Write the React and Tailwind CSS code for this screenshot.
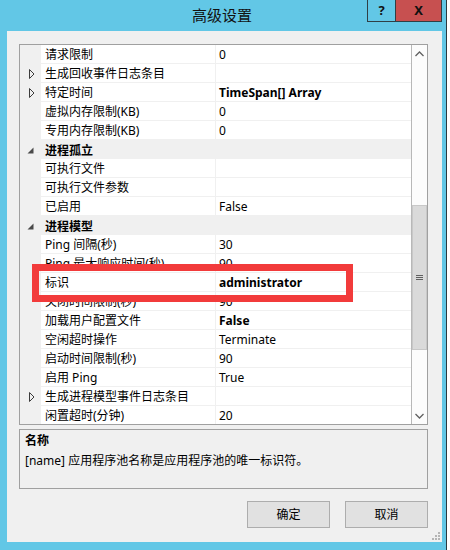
import React from "react";

const rows = [
  { name: "请求限制", value: "0" },
  { name: "生成回收事件日志条目", value: "", arrow: "closed" },
  { name: "特定时间", value: "TimeSpan[] Array", bold: true, arrow: "closed" },
  { name: "虚拟内存限制(KB)", value: "0" },
  { name: "专用内存限制(KB)", value: "0" },
  { name: "进程孤立", category: true },
  { name: "可执行文件", value: "" },
  { name: "可执行文件参数", value: "" },
  { name: "已启用", value: "False" },
  { name: "进程模型", category: true },
  { name: "Ping 间隔(秒)", value: "30" },
  { name: "Ping 最大响应时间(秒)", value: "90" },
  { name: "标识", value: "administrator", bold: true },
  { name: "关闭时间限制(秒)", value: "90" },
  { name: "加载用户配置文件", value: "False", bold: true },
  { name: "空闲超时操作", value: "Terminate" },
  { name: "启动时间限制(秒)", value: "90" },
  { name: "启用 Ping", value: "True" },
  { name: "生成进程模型事件日志条目", value: "", arrow: "closed" },
  { name: "闲置超时(分钟)", value: "20" },
];

function Arrow({ kind }) {
  if (kind === "closed") {
    return (
      <svg width="6" height="10" viewBox="0 0 6 10">
        <polygon points="0.5,0.5 5,5 0.5,9.5" fill="none" stroke="#3c3c3c" strokeWidth="1" />
      </svg>
    );
  }
  if (kind === "open") {
    return (
      <svg width="7" height="7" viewBox="0 0 7 7">
        <polygon points="6.5,0.5 6.5,6.5 0.5,6.5" fill="#4a4a4a" />
      </svg>
    );
  }
  return null;
}

function Row({ row }) {
  if (row.category) {
    return (
      <div className="flex h-[19px] shrink-0 bg-[#f0f0f0]">
        <div className="w-[21px] flex items-center justify-end pr-[7px] pt-[1px]">
          <Arrow kind="open" />
        </div>
        <div className="flex-1 pl-[4px] pt-[1px] leading-[19px] font-bold">{row.name}</div>
      </div>
    );
  }
  return (
    <div className="flex h-[19px] shrink-0">
      <div className="w-[21px] bg-[#f0f0f0] flex items-center justify-end pr-[6px]">
        <Arrow kind={row.arrow} />
      </div>
      <div className="w-[175px] bg-white border-b border-r border-[#f0f0f0] pl-[4px] pt-[1px] leading-[18px] whitespace-nowrap">
        {row.name}
      </div>
      <div
        className={`w-[195px] bg-white border-b border-[#f0f0f0] pl-[3px] pt-[1px] leading-[18px] whitespace-nowrap ${
          row.bold ? "font-bold" : ""
        }`}
      >
        {row.value}
      </div>
    </div>
  );
}

function Chevron({ up }) {
  return (
    <svg width="9" height="6" viewBox="0 0 9 6">
      <polyline
        points={up ? "0.5,5 4.5,1 8.5,5" : "0.5,1 4.5,5 8.5,1"}
        fill="none"
        stroke="#606060"
        strokeWidth="1.3"
      />
    </svg>
  );
}

export default function App() {
  return (
    <div className="w-[450px] h-[550px] flex bg-white text-[12px] text-black font-['Noto_Sans','Noto_Sans_CJK_SC',sans-serif] overflow-hidden">
      <div className="w-[447px] h-full flex flex-col bg-[#62c7e6] border-r border-[#2a3a40]">
        {/* title bar */}
        <div className="relative h-[31px] shrink-0 flex items-center justify-center">
          <span className="text-[15px] text-[#111] pr-[2px] pb-[1px]">高级设置</span>
          <div className="absolute top-0 right-[4px] flex h-[22px]">
            <div className="w-[29px] border border-t-0 border-[#2f3f45] flex items-center justify-center font-bold text-[13px] text-[#111]">
              ?
            </div>
            <div className="w-[46px] bg-[#c75050] border border-l-0 border-t-0 border-[#2f3f45] flex items-center justify-center font-bold text-[13px] text-[#111]">
              X
            </div>
          </div>
        </div>

        {/* client area */}
        <div className="relative ml-[7px] mr-[4px] h-[511px] bg-[#f0f0f0] pl-[12px] pr-[14px] pt-[13px] flex flex-col">
          {/* property grid */}
          <div className="relative h-[381px] border border-[#a0a0a0] flex overflow-hidden">
            <div className="flex flex-col">
              {rows.map((r) => (
                <Row key={r.name} row={r} />
              ))}
            </div>
            <div className="w-[17px] border-l border-[#b8b8b8] bg-[#fcfcfc] flex flex-col">
              <div className="h-[17px] flex items-center justify-center">
                <Chevron up />
              </div>
              <div className="h-[143px]" />
              <div className="h-[145px] bg-[#dadada] border border-[#c8c8c8] flex items-center justify-center">
                <div className="flex flex-col gap-[1px]">
                  <div className="w-[7px] h-px bg-[#606060]" />
                  <div className="w-[7px] h-px bg-[#606060]" />
                  <div className="w-[7px] h-px bg-[#606060]" />
                </div>
              </div>
              <div className="flex-1" />
              <div className="h-[17px] flex items-center justify-center">
                <Chevron />
              </div>
            </div>
            {/* red annotation box */}
            <div className="absolute left-[12px] top-[219px] w-[321px] h-[38px] border-[7px] border-[#f23b3b]" />
          </div>

          {/* description */}
          <div className="mt-[4px] h-[60px] border border-[#a0a0a0] px-[5px] pt-[1px] leading-[20px]">
            <div className="font-bold">名称</div>
            <div>[name] 应用程序池名称是应用程序池的唯一标识符。</div>
          </div>

          {/* buttons */}
          <div className="mt-[12px] flex justify-end gap-[15px]">
            <button className="w-[83px] h-[27px] bg-[#e1e1e1] border border-[#adadad] text-[12px]">确定</button>
            <button className="w-[83px] h-[27px] bg-[#e1e1e1] border border-[#adadad] text-[12px]">取消</button>
          </div>

          {/* resize grip */}
          <svg className="absolute right-[2px] bottom-[2px]" width="8" height="8" viewBox="0 0 8 8">
            <rect x="6" y="0" width="2" height="2" fill="#b5b5b5" />
            <rect x="3" y="3" width="2" height="2" fill="#b5b5b5" />
            <rect x="6" y="3" width="2" height="2" fill="#b5b5b5" />
            <rect x="0" y="6" width="2" height="2" fill="#b5b5b5" />
            <rect x="3" y="6" width="2" height="2" fill="#b5b5b5" />
            <rect x="6" y="6" width="2" height="2" fill="#b5b5b5" />
          </svg>
        </div>
        <div className="flex-1" />
      </div>
    </div>
  );
}
